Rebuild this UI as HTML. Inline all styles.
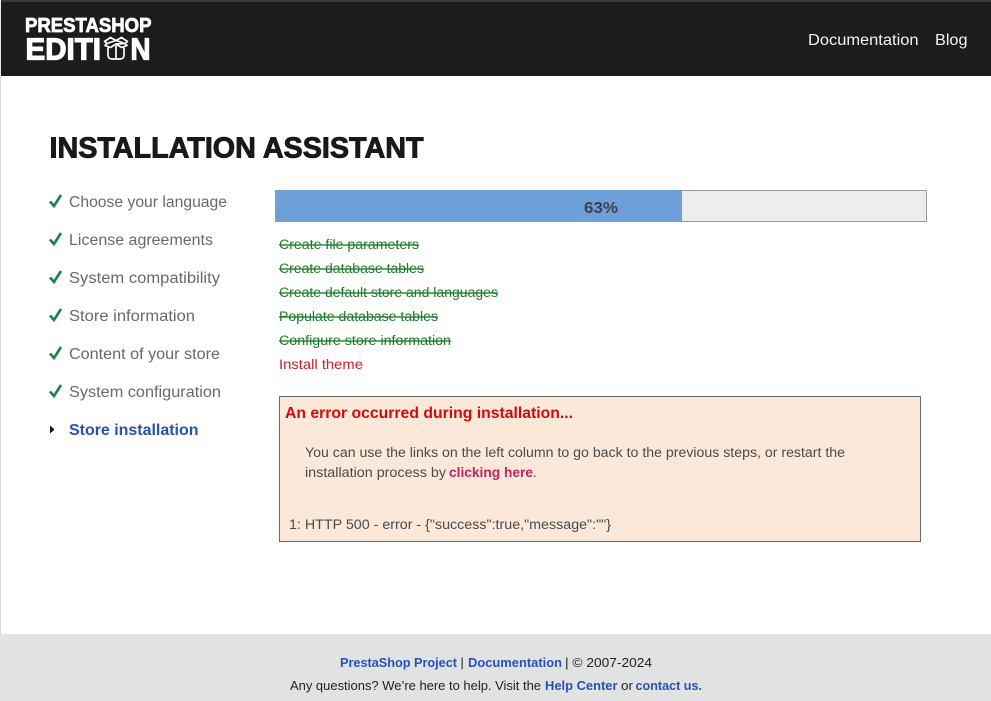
<!DOCTYPE html>
<html lang="en">
<head>
<meta charset="utf-8">
<title>PrestaShop Installation Assistant</title>
<style>
html,body{margin:0;padding:0;width:991px;height:701px;overflow:hidden;background:#fff;}
svg{display:block;}
text{font-family:"Liberation Sans",sans-serif;}
.s{font-size:15.5px;fill:#666a6e;}
.t{font-size:13.5px;fill:#1e7a2a;text-decoration:line-through;}
.b{font-size:13.5px;fill:#4a4a4a;}
.f{font-size:12.5px;fill:#222;}
.l{font-size:12.5px;fill:#2850b8;font-weight:bold;}
.chk{fill:none;stroke:#1d8045;stroke-width:2.6;}
</style>
</head>
<body>
<svg width="991" height="701" viewBox="0 0 991 701" xmlns="http://www.w3.org/2000/svg">
<rect x="0" y="0" width="991" height="701" fill="#fff"/>
<rect x="0" y="76" width="1" height="558" fill="#d8d8d8"/>
<rect x="0" y="0" width="991" height="76" fill="#1c1c1b"/>
<rect x="0" y="0" width="991" height="2" fill="#3a3a3a"/>
<rect x="0" y="0" width="1" height="76" fill="#e8e8e8"/>

<!-- logo -->
<text x="25" y="32" font-size="20" font-weight="bold" fill="#fff" stroke="#fff" stroke-width=".8" textLength="126.500" lengthAdjust="spacingAndGlyphs">PRESTASHOP</text>
<text x="25.500" y="59.500" font-size="31" font-weight="bold" fill="#fff" stroke="#fff" stroke-width="1.200" textLength="75.500" lengthAdjust="spacingAndGlyphs">EDITI</text>
<text x="130.500" y="59.500" font-size="31" font-weight="bold" fill="#fff" stroke="#fff" stroke-width="1.200" textLength="20" lengthAdjust="spacingAndGlyphs">N</text>
<g fill="none" stroke="#fff" stroke-width="1.700" stroke-linejoin="round" stroke-linecap="round">
<path d="M116 40.500L110.500 37.500L104.500 41.500L107 43.500L105 45.500L110.500 47.500L116 44L121.500 47.500L127 45.500L125 43.500L127.500 41.500L121.500 37.500Z"/>
<path d="M107 43.500L116 40.500L125 43.500L116 44"/>
<path d="M108 48V55Q108 59 112 59H120Q124 59 124 55V48"/>
<path d="M116 46V58"/>
</g>

<text x="808" y="45" font-size="15.500" fill="#f2f2f2" textLength="110.500" lengthAdjust="spacingAndGlyphs">Documentation</text>
<text x="935" y="45" font-size="15.500" fill="#f2f2f2" textLength="32.500" lengthAdjust="spacingAndGlyphs">Blog</text>

<!-- heading -->
<text x="49.500" y="157.500" font-size="29" font-weight="bold" fill="#191919" stroke="#191919" stroke-width=".9" textLength="374" lengthAdjust="spacingAndGlyphs">INSTALLATION ASSISTANT</text>

<!-- sidebar -->
<path class="chk" d="M50 201.500l4 4.500 7-11"/>
<text class="s" x="69" y="207" textLength="158" lengthAdjust="spacingAndGlyphs">Choose your language</text>
<path class="chk" d="M50 239.500l4 4.500 7-11"/>
<text class="s" x="69" y="245" textLength="144" lengthAdjust="spacingAndGlyphs">License agreements</text>
<path class="chk" d="M50 277.500l4 4.500 7-11"/>
<text class="s" x="69" y="283" textLength="151" lengthAdjust="spacingAndGlyphs">System compatibility</text>
<path class="chk" d="M50 315.500l4 4.500 7-11"/>
<text class="s" x="69" y="321" textLength="126" lengthAdjust="spacingAndGlyphs">Store information</text>
<path class="chk" d="M50 353.500l4 4.500 7-11"/>
<text class="s" x="69" y="359" textLength="151" lengthAdjust="spacingAndGlyphs">Content of your store</text>
<path class="chk" d="M50 391.500l4 4.500 7-11"/>
<text class="s" x="69" y="397" textLength="152" lengthAdjust="spacingAndGlyphs">System configuration</text>
<path d="M50 425.500l4.500 4-4.500 4z" fill="#111"/>
<text x="69" y="435" font-size="15.500" font-weight="bold" fill="#2850b0" textLength="129.500" lengthAdjust="spacingAndGlyphs">Store installation</text>

<!-- progress -->
<rect x="275.500" y="190.500" width="651" height="31" fill="#ededed" stroke="#999"/>
<rect x="275" y="190" width="407" height="32" fill="#6f9fd8"/>
<text x="584" y="213" font-size="15.500" font-weight="bold" fill="#37424f" textLength="34" lengthAdjust="spacingAndGlyphs">63%</text>

<!-- tasks -->
<text class="t" x="279" y="249" textLength="140" lengthAdjust="spacingAndGlyphs">Create file parameters</text>
<text class="t" x="279" y="273" textLength="145" lengthAdjust="spacingAndGlyphs">Create database tables</text>
<text class="t" x="279" y="297" textLength="219" lengthAdjust="spacingAndGlyphs">Create default store and languages</text>
<text class="t" x="279" y="321" textLength="159" lengthAdjust="spacingAndGlyphs">Populate database tables</text>
<text class="t" x="279" y="345" textLength="172" lengthAdjust="spacingAndGlyphs">Configure store information</text>
<text x="279" y="369" font-size="13.500" fill="#c8202c" textLength="84" lengthAdjust="spacingAndGlyphs">Install theme</text>

<!-- error box -->
<rect x="279.500" y="396.500" width="641" height="145" fill="#fbe8d9" stroke="#6a6a6a"/>
<text x="285" y="418" font-size="15.500" font-weight="bold" fill="#d20a0a" textLength="288" lengthAdjust="spacingAndGlyphs">An error occurred during installation...</text>
<text class="b" x="305" y="457" textLength="540" lengthAdjust="spacingAndGlyphs">You can use the links on the left column to go back to the previous steps, or restart the</text>
<text class="b" x="305" y="477" textLength="141" lengthAdjust="spacingAndGlyphs">installation process by</text>
<text x="449" y="477" font-size="13.500" font-weight="bold" fill="#c0245c" textLength="84" lengthAdjust="spacingAndGlyphs">clicking here</text>
<text class="b" x="533" y="477">.</text>
<text class="b" x="289" y="529" textLength="322" lengthAdjust="spacingAndGlyphs">1: HTTP 500 - error - {"success":true,"message":""}</text>

<!-- footer -->
<rect x="0" y="634" width="991" height="67" fill="#e1e2e2"/>
<text class="l" x="340" y="667" textLength="117" lengthAdjust="spacingAndGlyphs">PrestaShop Project</text>
<text class="f" x="460.500" y="667">|</text>
<text class="l" x="468" y="667" textLength="94" lengthAdjust="spacingAndGlyphs">Documentation</text>
<text class="f" x="565" y="667" textLength="87" lengthAdjust="spacingAndGlyphs">| © 2007-2024</text>
<text class="f" x="290" y="690" textLength="251" lengthAdjust="spacingAndGlyphs">Any questions? We’re here to help. Visit the</text>
<text class="l" x="545" y="690" textLength="72.500" lengthAdjust="spacingAndGlyphs">Help Center</text>
<text class="f" x="621" y="690" textLength="12" lengthAdjust="spacingAndGlyphs">or</text>
<text class="l" x="635.500" y="690" textLength="63" lengthAdjust="spacingAndGlyphs">contact us</text>
<text class="l" x="698.500" y="690">.</text>
</svg>
</body>
</html>
